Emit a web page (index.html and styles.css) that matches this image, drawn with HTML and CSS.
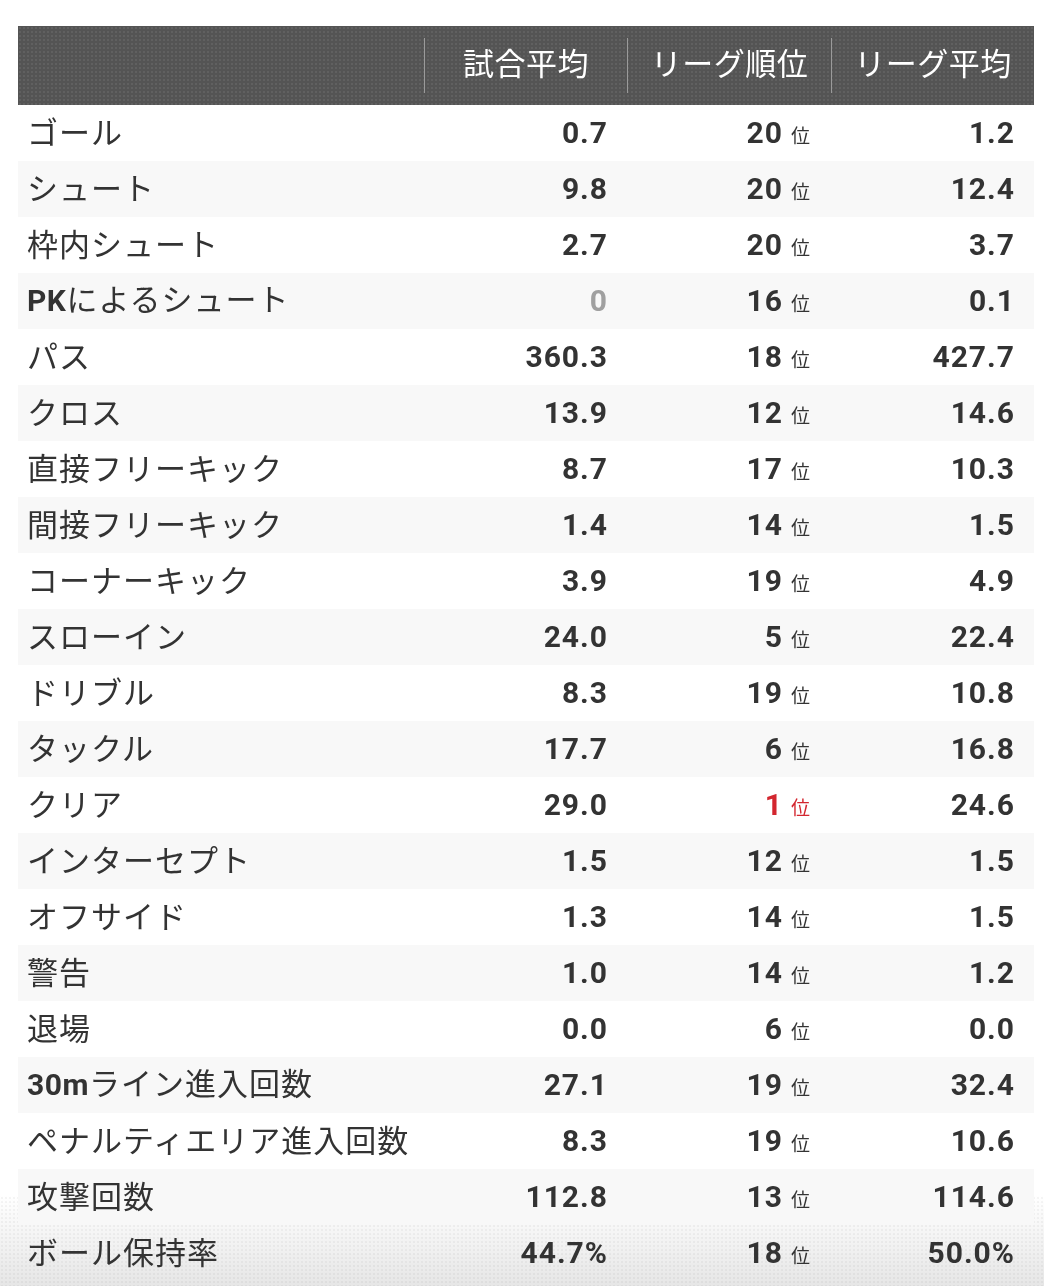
FILE: index.html
```html
<!DOCTYPE html>
<html lang="ja">
<head>
<meta charset="utf-8">
<link rel="stylesheet" href="styles.css">
</head>
<body>
<div class="fade"></div>
<div class="stats">
  <div class="row head">
    <div class="hcell blank"></div>
    <div class="hcell"><span>試合平均</span></div>
    <div class="hcell"><span>リーグ順位</span></div>
    <div class="hcell"><span>リーグ平均</span></div>
  </div>
  <div class="row"><div class="label">ゴール</div><div class="num">0.7</div><div class="rank">20<span class="i">位</span></div><div class="num">1.2</div></div>
  <div class="row alt"><div class="label">シュート</div><div class="num">9.8</div><div class="rank">20<span class="i">位</span></div><div class="num">12.4</div></div>
  <div class="row"><div class="label">枠内シュート</div><div class="num">2.7</div><div class="rank">20<span class="i">位</span></div><div class="num">3.7</div></div>
  <div class="row alt"><div class="label"><b>PK</b>によるシュート</div><div class="num zero">0</div><div class="rank">16<span class="i">位</span></div><div class="num">0.1</div></div>
  <div class="row"><div class="label">パス</div><div class="num">360.3</div><div class="rank">18<span class="i">位</span></div><div class="num">427.7</div></div>
  <div class="row alt"><div class="label">クロス</div><div class="num">13.9</div><div class="rank">12<span class="i">位</span></div><div class="num">14.6</div></div>
  <div class="row"><div class="label">直接フリーキック</div><div class="num">8.7</div><div class="rank">17<span class="i">位</span></div><div class="num">10.3</div></div>
  <div class="row alt"><div class="label">間接フリーキック</div><div class="num">1.4</div><div class="rank">14<span class="i">位</span></div><div class="num">1.5</div></div>
  <div class="row"><div class="label">コーナーキック</div><div class="num">3.9</div><div class="rank">19<span class="i">位</span></div><div class="num">4.9</div></div>
  <div class="row alt"><div class="label">スローイン</div><div class="num">24.0</div><div class="rank">5<span class="i">位</span></div><div class="num">22.4</div></div>
  <div class="row"><div class="label">ドリブル</div><div class="num">8.3</div><div class="rank">19<span class="i">位</span></div><div class="num">10.8</div></div>
  <div class="row alt"><div class="label">タックル</div><div class="num">17.7</div><div class="rank">6<span class="i">位</span></div><div class="num">16.8</div></div>
  <div class="row"><div class="label">クリア</div><div class="num">29.0</div><div class="rank top">1<span class="i">位</span></div><div class="num">24.6</div></div>
  <div class="row alt"><div class="label">インターセプト</div><div class="num">1.5</div><div class="rank">12<span class="i">位</span></div><div class="num">1.5</div></div>
  <div class="row"><div class="label">オフサイド</div><div class="num">1.3</div><div class="rank">14<span class="i">位</span></div><div class="num">1.5</div></div>
  <div class="row alt"><div class="label">警告</div><div class="num">1.0</div><div class="rank">14<span class="i">位</span></div><div class="num">1.2</div></div>
  <div class="row"><div class="label">退場</div><div class="num">0.0</div><div class="rank">6<span class="i">位</span></div><div class="num">0.0</div></div>
  <div class="row alt"><div class="label"><b>30m</b>ライン進入回数</div><div class="num">27.1</div><div class="rank">19<span class="i">位</span></div><div class="num">32.4</div></div>
  <div class="row"><div class="label">ペナルティエリア進入回数</div><div class="num">8.3</div><div class="rank">19<span class="i">位</span></div><div class="num">10.6</div></div>
  <div class="row alt"><div class="label">攻撃回数</div><div class="num">112.8</div><div class="rank">13<span class="i">位</span></div><div class="num">114.6</div></div>
  <div class="row"><div class="label">ボール保持率</div><div class="num">44.7%</div><div class="rank">18<span class="i">位</span></div><div class="num">50.0%</div></div>
</div>
</body>
</html>
```

FILE: styles.css
```css
html, body {
  margin: 0;
  padding: 0;
  background: #ffffff;
}
body {
  padding: 26px 10px 0 18px;
  font-family: "Noto Sans CJK JP", "Roboto", sans-serif;
  color: #333333;
}
.stats {
  position: relative;
  z-index: 1;
  width: 1016px;
}
.row {
  display: grid;
  grid-template-columns: 406px 203px 204px 203px;
  height: 56px;
  align-items: center;
}
.row.alt {
  background: #f8f8f8;
}
.row.head {
  height: 79px;
  background-color: #545454;
  background-image: radial-gradient(rgba(255,255,255,0.07) 0.8px, transparent 1px);
  background-size: 4px 4px;
  align-items: stretch;
}
.hcell {
  margin: 12px 0;
  border-left: 1px solid #9a9a9a;
  display: flex;
  align-items: center;
  justify-content: center;
  color: #ffffff;
  font-size: 31px;
  font-weight: 400;
  letter-spacing: 0.5px;
}
.hcell span {
  margin-top: -8px;
}
.hcell.blank {
  border-left: none;
}
.label {
  padding-left: 9px;
  font-size: 31px;
  letter-spacing: 1px;
  font-weight: 400;
  white-space: nowrap;
  line-height: 1;
  padding-bottom: 5px;
}
.label b {
  font-family: "Roboto", sans-serif;
  font-weight: 700;
  font-size: 30px;
  letter-spacing: 0.5px;
}
.num, .rank {
  text-align: right;
  font-family: "Roboto", sans-serif;
  font-weight: 700;
  font-size: 30px;
  letter-spacing: 1px;
  color: #333333;
  line-height: 1;
}
.num {
  padding-right: 19px;
}
.rank {
  padding-right: 21px;
}
.num.zero {
  color: #a0a0a0;
}
.rank .i {
  font-family: "Noto Sans CJK JP", sans-serif;
  font-weight: 400;
  font-size: 19px;
  letter-spacing: 0;
  margin-left: 8px;
  color: #333333;
}
.rank.top, .rank.top .i {
  color: #d3262f;
}
.fade {
  position: fixed;
  left: 0;
  right: 0;
  bottom: 0;
  height: 90px;
  z-index: 0;
  background-color: transparent;
  background-image:
    radial-gradient(rgba(0,0,0,0.04) 0.8px, transparent 1px),
    linear-gradient(to bottom, rgba(232,232,232,0) 0%, rgba(234,234,234,0.7) 60%, rgba(230,230,230,1) 100%);
  background-size: 4px 4px, 100% 100%;
  pointer-events: none;
}
```
